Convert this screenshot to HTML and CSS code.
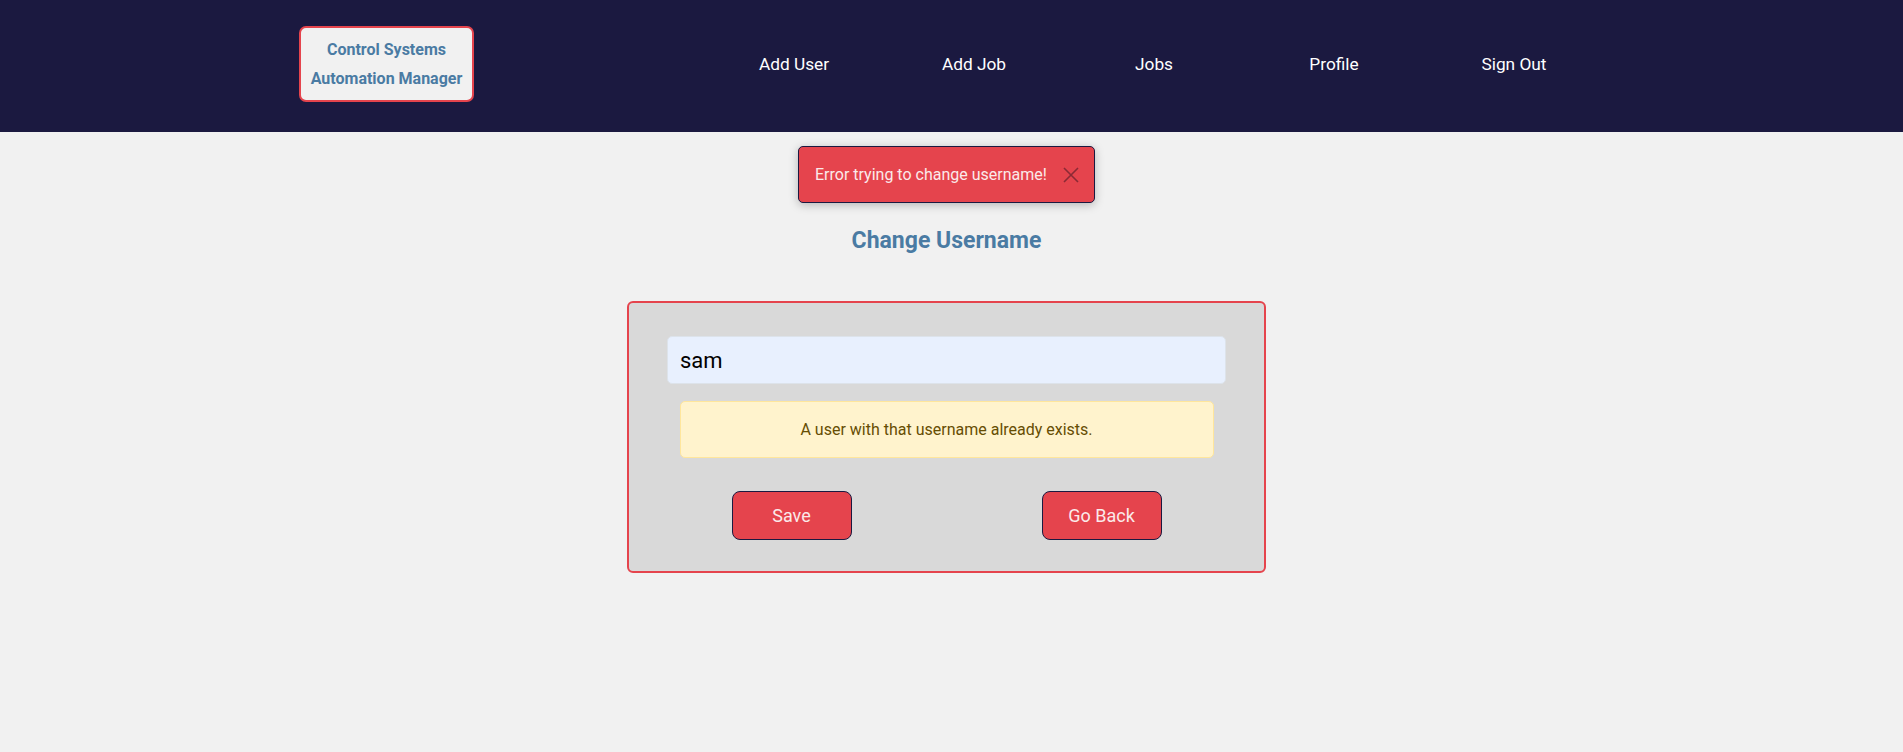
FILE: index.html
```html
<!DOCTYPE html>
<html lang="en">
<head>
<meta charset="utf-8">
<title>Change Username</title>
<link rel="stylesheet" href="styles.css">
</head>
<body>
<header class="topbar">
  <div class="topbar-inner">
    <a class="brand" href="#"><span>Control Systems</span><span>Automation Manager</span></a>
    <nav class="nav">
      <a href="#">Add User</a>
      <a href="#">Add Job</a>
      <a href="#">Jobs</a>
      <a href="#">Profile</a>
      <a href="#">Sign Out</a>
    </nav>
  </div>
</header>
<main class="main">
  <div class="toast">
    <span>Error trying to change username!</span>
    <svg class="toast-close" width="16" height="16" viewBox="0 0 16 16"><path d="M1 1L15 15M15 1L1 15" stroke="currentColor" stroke-width="1.6" fill="none"/></svg>
  </div>
  <h2 class="title">Change Username</h2>
  <form class="card">
    <input class="field" type="text" value="sam">
    <div class="alert">A user with that username already exists.</div>
    <div class="actions">
      <div class="cell"><button type="button" class="btn">Save</button></div>
      <div class="cell"><button type="button" class="btn">Go Back</button></div>
    </div>
  </form>
</main>
</body>
</html>
```
FILE: styles.css
```css
* { box-sizing: border-box; }
html, body { margin: 0; padding: 0; }
body {
  background: #f1f1f1;
  font-family: Roboto, "Liberation Sans", Arial, sans-serif;
  color: #212529;
}
.topbar {
  background: #1b1940;
  height: 132px;
}
.topbar-inner {
  width: 1305px;
  margin: 0 auto;
  height: 100%;
  display: flex;
  align-items: center;
  justify-content: space-between;
}
.brand {
  width: 175px;
  height: 76px;
  margin-top: -4px;
  background: #f1f1f1;
  border: 2px solid #e5444d;
  border-radius: 7px;
  display: flex;
  flex-direction: column;
  align-items: center;
  justify-content: center;
  gap: 9px;
  text-decoration: none;
  color: #4a7ba3;
  font-weight: 700;
  font-size: 16px;
  line-height: 20px;
}
.nav {
  display: flex;
  margin-top: -4px;
}
.nav a {
  width: 180px;
  text-align: center;
  color: #ffffff;
  text-decoration: none;
  font-size: 17.3px;
}
.main {
  display: flex;
  flex-direction: column;
  align-items: center;
  padding-top: 14px;
  padding-right: 10px;
}
.toast {
  width: 297px;
  height: 57px;
  background: #e5444d;
  border: 1px solid #1b1940;
  border-radius: 5px;
  box-shadow: 0 2px 10px rgba(0,0,0,0.25);
  display: flex;
  align-items: center;
  justify-content: space-between;
  padding: 0 15px 0 16px;
  color: #fbeaea;
  font-size: 16px;
}
.toast-close { color: #8b2a35; }
.title {
  margin: 24px 0 0;
  color: #4a7ba3;
  font-size: 23px;
  font-weight: 700;
  line-height: 28px;
}
.card {
  margin-top: 46px;
  width: 639px;
  background: #d9d9d9;
  border: 2px solid #e5444d;
  border-radius: 6px;
  padding: 33px 38px 31px;
  display: flex;
  flex-direction: column;
  align-items: center;
}
.field {
  width: 559px;
  height: 48px;
  background: #e8f0fe;
  border: 1px solid #dde3ea;
  border-radius: 5px;
  padding: 0 12px;
  font-family: Roboto, "Liberation Sans", Arial, sans-serif;
  font-size: 22px;
  color: #000;
  outline: none;
}
.alert {
  margin-top: 17px;
  width: 534px;
  height: 57px;
  background: #fff3cd;
  border: 1px solid #ffe69c;
  border-radius: 5px;
  color: #664d03;
  font-size: 16px;
  display: flex;
  align-items: center;
  justify-content: center;
}
.actions {
  margin-top: 33px;
  width: 620px;
  display: grid;
  grid-template-columns: 1fr 1fr;
}
.cell { display: flex; justify-content: center; }
.btn {
  width: 120px;
  height: 49px;
  background: #e5444d;
  border: 1px solid #1b1940;
  border-radius: 8px;
  color: #fbeaea;
  font-family: Roboto, "Liberation Sans", Arial, sans-serif;
  font-size: 18px;
  cursor: pointer;
}
```
